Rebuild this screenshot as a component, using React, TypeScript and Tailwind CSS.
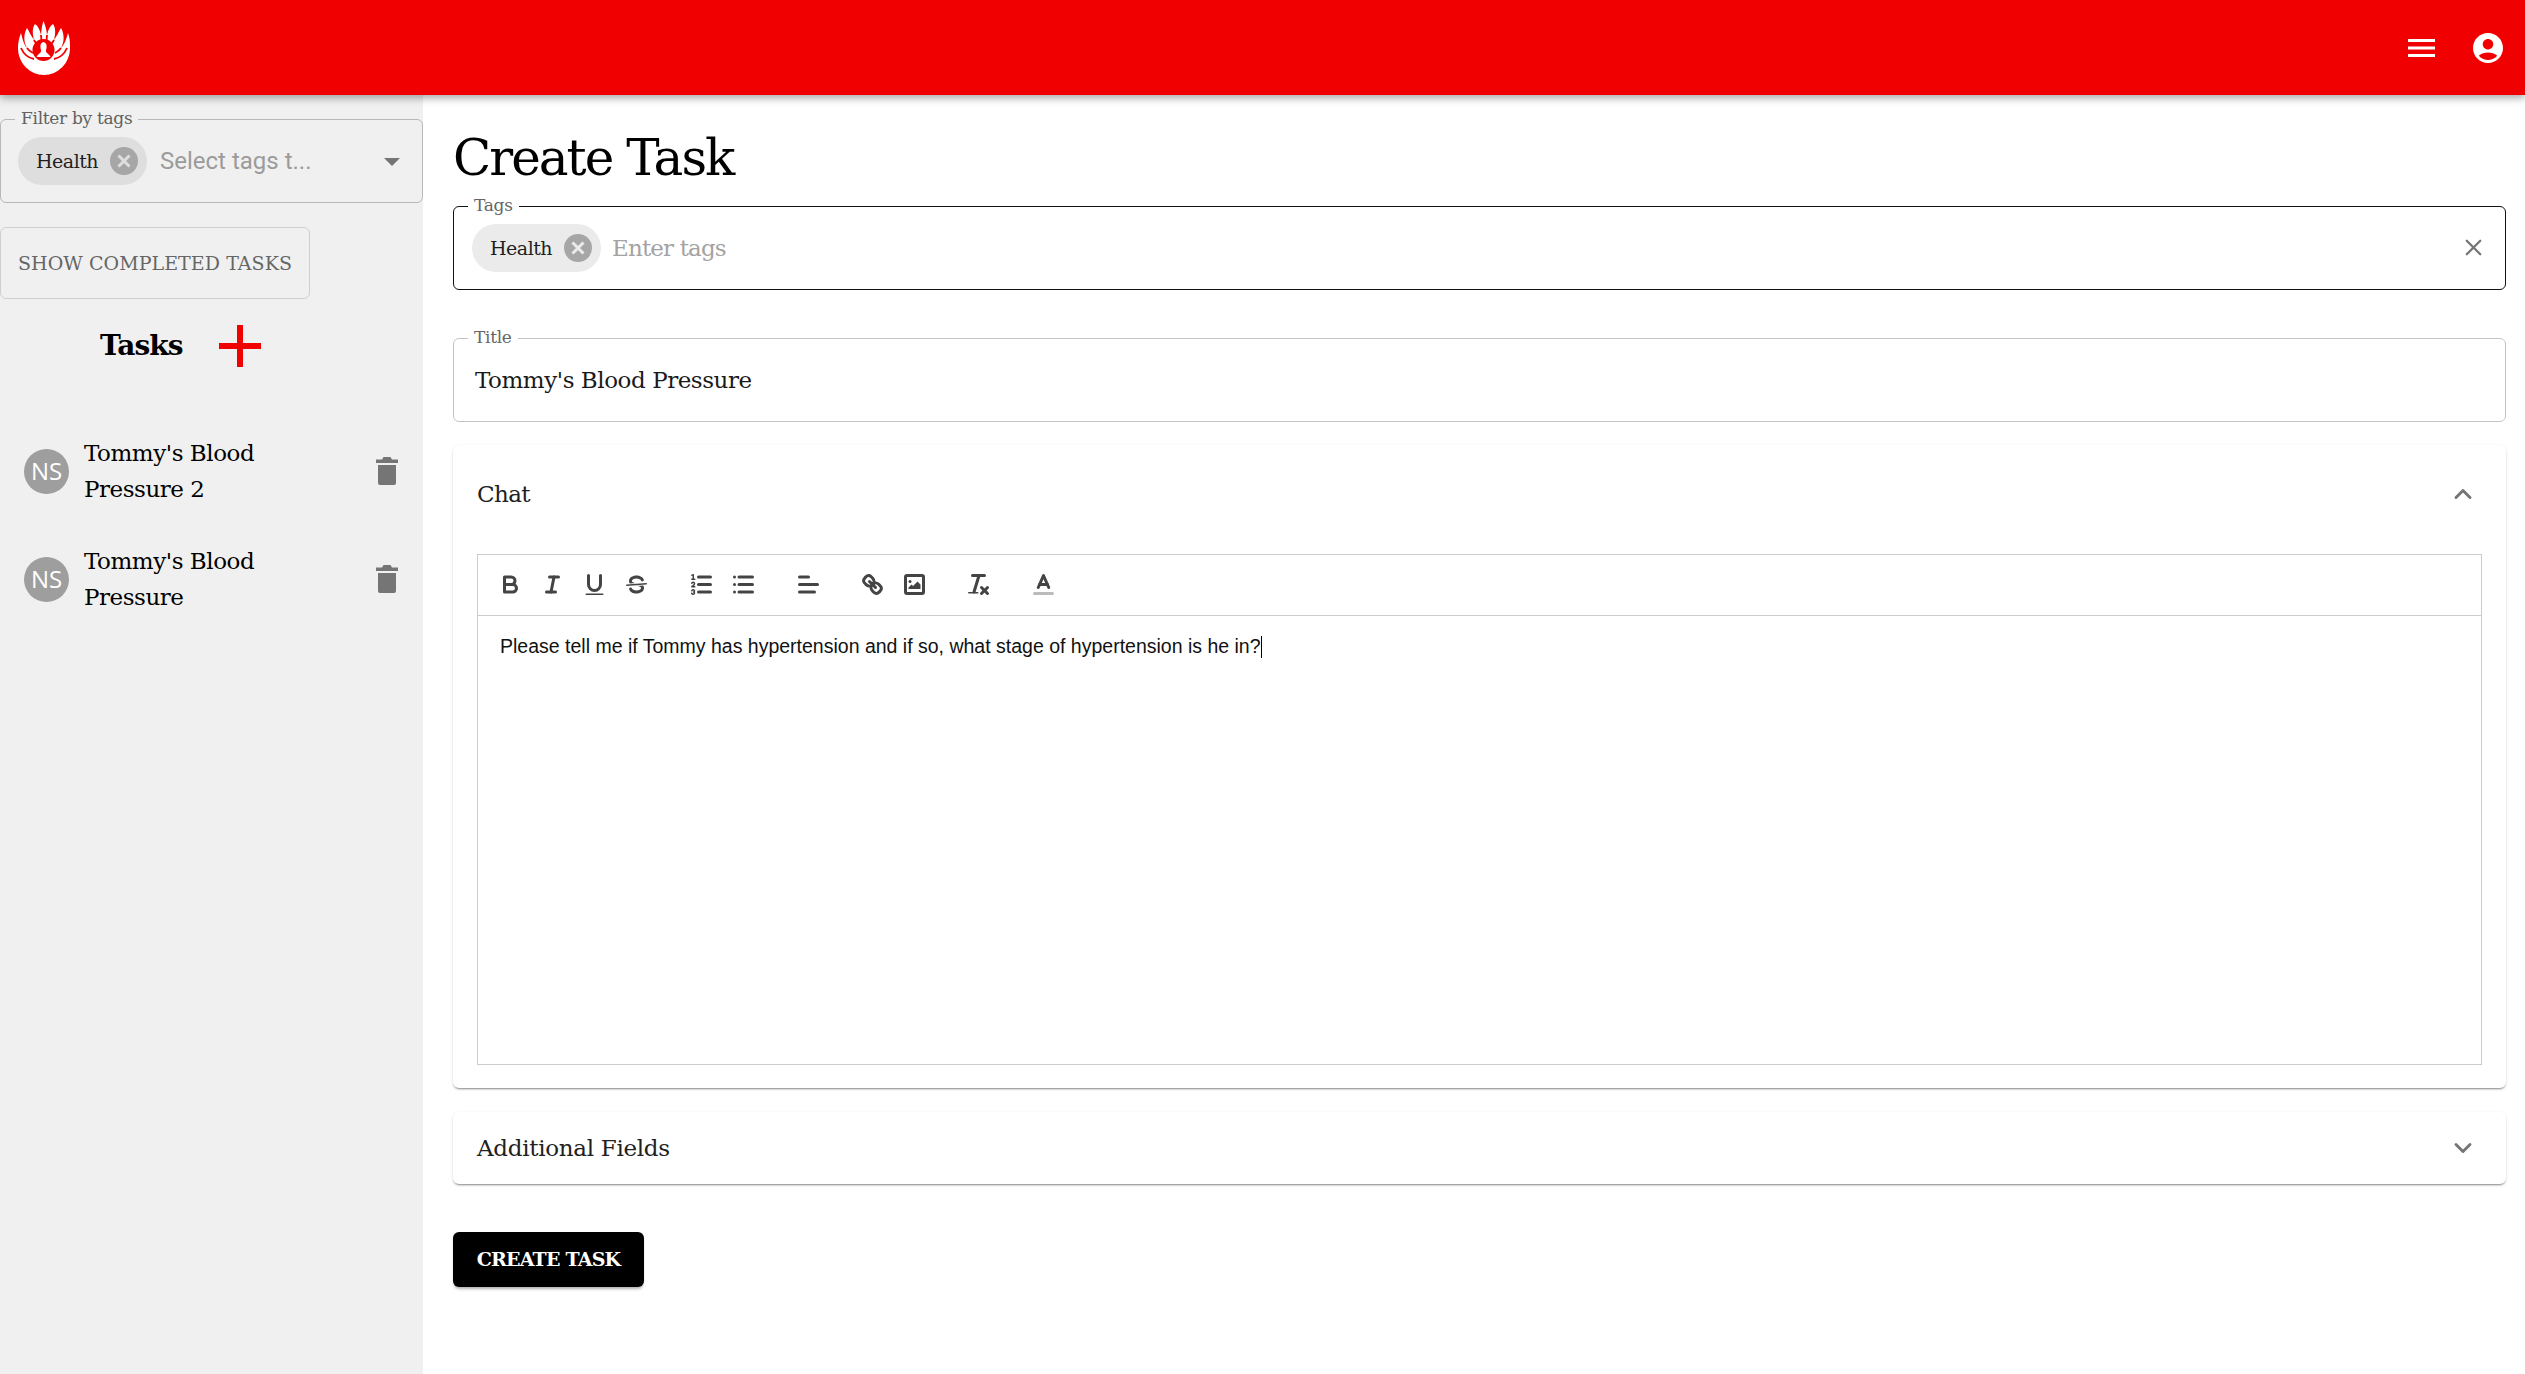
import { ChevronDown, ChevronUp, X } from "lucide-react";

const ql = "fill-none stroke-[#444] stroke-2 [stroke-linecap:round] [stroke-linejoin:round]";
const qlThin = "fill-none stroke-[#444] stroke-1 [stroke-linecap:round] [stroke-linejoin:round]";

function QIcon({ children }: { children: React.ReactNode }) {
  return (
    <button className="w-[42px] h-[36px] flex items-center justify-center shrink-0">
      <svg viewBox="0 0 18 18" className="w-[27px] h-[27px]">{children}</svg>
    </button>
  );
}

function Logo() {
  return (
    <svg viewBox="0 0 52 54" className="w-[52px] h-[54px]">
      <path fill="#fff" d="M25.500 0 C27 4 28.500 8 29 14 C30 9 32 5 35 3 C38 7 37.500 13 36 19 C39 15 41 10 43 7 C46 12 47 20 43 27 C46 24 48.500 18 50 12 C52 17 52 22 52 27 C52 42 40 54 26 54 C12 54 0 42 0 27 C0 22 1 17 3 12 C4.500 18 6 24 9 27 C5 20 6 12 9 7 C11 10 13 15 16 19 C14.500 13 14 7 17 3 C20 5 22 9 23 14 C23.500 8 24 4 25.500 0Z" />
      <g fill="none" stroke="#f00000" strokeWidth="1.800">
        <path d="M9 27 C11 30 13 31 15 32" />
        <path d="M43 27 C41 30 39 31 37 32" />
        <path d="M16 19 C17 21 18 22 19 23" />
        <path d="M36 19 C35 21 34 22 33 23" />
        <path d="M23 14 L23.500 20" />
        <path d="M29 14 L28.500 20" />
        <path d="M3 27 C6 34 11 37 16 38" />
        <path d="M49 27 C46 34 41 37 36 38" />
      </g>
      <circle cx="25.500" cy="29" r="11" fill="#f00000" />
      <path d="M25.500 21 C23 21.500 22 24 22.500 27 C23 29 23.500 30 22.500 31.500 C21 33 19.500 33.500 18.500 36 L32.500 36 C31.500 33.500 30 33 28.500 31.500 C27.500 30 28 29 28.500 27 C29 24 28 21.500 25.500 21Z" fill="#fff" />
    </svg>
  );
}

function Chip({ bg }: { bg: string }) {
  return (
    <div className={`h-[48px] w-[129px] rounded-full flex items-center justify-between pl-[18px] pr-[9px] shrink-0 ${bg}`}>
      <span className="text-[19px] tracking-[-0.5px] text-[#1f1f1f]">Health</span>
      <svg viewBox="0 0 28 28" className="w-[28px] h-[28px]">
        <circle cx="14" cy="14" r="14" fill="#a6a6a6" />
        <path d="M8.500 8.500 L19.500 19.500 M19.500 8.500 L8.500 19.500" stroke={bg === "bg-[#dedede]" ? "#dedede" : "#ebebeb"} strokeWidth="3" />
      </svg>
    </div>
  );
}

function Trash() {
  return (
    <svg viewBox="0 0 22 28" className="w-[22px] h-[28px] fill-[#757575]">
      <path d="M2 8h18v18a2 2 0 0 1-2 2H4a2 2 0 0 1-2-2z" />
      <path d="M0 2.500h6L7.500 0h7L16 2.500h6V6H0z" />
    </svg>
  );
}

function TaskRow({ title }: { title: string }) {
  return (
    <div className="h-[108px] flex items-center pl-[24px] pr-[25px]">
      <div className="w-[45px] h-[45px] rounded-full bg-[#9e9e9e] text-white flex items-center justify-center text-[24px] font-['Open_Sans',sans-serif] shrink-0">NS</div>
      <div className="ml-[15px] w-[240px] text-[23px] leading-[36px] tracking-[-0.45px] text-black">{title}</div>
      <div className="ml-auto"><Trash /></div>
    </div>
  );
}

function Toolbar() {
  return (
    <div className="h-[61px] border-b border-[#ccc] flex items-center pl-[11px] pb-[2px]">
      <div className="flex mr-[23px]">
        <QIcon>
          <path className={ql} d="M5,4H9.500A2.500,2.500,0,0,1,12,6.500v0A2.500,2.500,0,0,1,9.500,9H5A0,0,0,0,1,5,9V4A0,0,0,0,1,5,4Z" />
          <path className={ql} d="M5,9h5.500A2.500,2.500,0,0,1,13,11.500v0A2.500,2.500,0,0,1,10.500,14H5a0,0,0,0,1,0,0V9A0,0,0,0,1,5,9Z" />
        </QIcon>
        <QIcon>
          <line className={ql} x1="7" x2="13" y1="4" y2="4" />
          <line className={ql} x1="5" x2="11" y1="14" y2="14" />
          <line className={ql} x1="8" x2="10" y1="14" y2="4" />
        </QIcon>
        <QIcon>
          <path className={ql} d="M5,3V9a4.012,4.012,0,0,0,4,4H9a4.012,4.012,0,0,0,4-4V3" />
          <rect className="fill-[#444]" height="1" rx="0.5" ry="0.5" width="12" x="3" y="15" />
        </QIcon>
        <QIcon>
          <line className={qlThin} x1="15.500" x2="2.500" y1="8.500" y2="9.500" />
          <path className="fill-[#444]" d="M9.007,8C6.542,7.791,6,7.519,6,6.500,6,5.792,7.283,5,9,5c1.571,0,2.765.679,2.969,1.309a1,1,0,0,0,1.900-.617C13.356,4.106,11.354,3,9,3,6.200,3,4,4.538,4,6.500a3.200,3.200,0,0,0,.5,1.843Z" />
          <path className="fill-[#444]" d="M8.984,10C11.457,10.208,12,10.479,12,11.500c0,.708-1.283,1.500-3,1.500-1.571,0-2.765-.679-2.969-1.309a1,1,0,1,0-1.900.617C4.644,13.894,6.646,15,9,15c2.800,0,5-1.538,5-3.500a3.200,3.200,0,0,0-.5-1.843Z" />
        </QIcon>
      </div>
      <div className="flex mr-[23px]">
        <QIcon>
          <line className={ql} x1="7" x2="15" y1="4" y2="4" />
          <line className={ql} x1="7" x2="15" y1="9" y2="9" />
          <line className={ql} x1="7" x2="15" y1="14" y2="14" />
          <line className={qlThin} x1="2.500" x2="4.500" y1="5.500" y2="5.500" />
          <path className="fill-[#444]" d="M3.500,6A0.500,0.500,0,0,1,3,5.500V3.085l-0.276.138A0.500,0.500,0,0,1,2.053,3c-0.124-.247-0.023-0.324.224-0.447l1-.5A0.500,0.500,0,0,1,4,2.500v3A0.500,0.500,0,0,1,3.500,6Z" />
          <path className={qlThin} d="M4.500,10.500h-2c0-.234,1.850-1.076,1.850-2.234A0.959,0.959,0,0,0,2.500,8.156" />
          <path className={qlThin} d="M2.500,14.846a0.959,0.959,0,0,0,1.850-.109A0.700,0.700,0,0,0,3.750,14a0.688,0.688,0,0,0,.6-0.736,0.959,0.959,0,0,0-1.850-.109" />
        </QIcon>
        <QIcon>
          <line className={ql} x1="6" x2="15" y1="4" y2="4" />
          <line className={ql} x1="6" x2="15" y1="9" y2="9" />
          <line className={ql} x1="6" x2="15" y1="14" y2="14" />
          <line className={ql} x1="3" x2="3" y1="4" y2="4" />
          <line className={ql} x1="3" x2="3" y1="9" y2="9" />
          <line className={ql} x1="3" x2="3" y1="14" y2="14" />
        </QIcon>
      </div>
      <div className="flex mr-[22px]">
        <QIcon>
          <line className={ql} x1="3" x2="15" y1="9" y2="9" />
          <line className={ql} x1="3" x2="13" y1="14" y2="14" />
          <line className={ql} x1="3" x2="9" y1="4" y2="4" />
        </QIcon>
      </div>
      <div className="flex mr-[22px]">
        <QIcon>
          <line className={ql} x1="7" x2="11" y1="7" y2="11" />
          <path className={ql} d="M8.900,4.577a3.476,3.476,0,0,1,.36,4.679A3.476,3.476,0,0,1,4.577,8.900C3.185,7.500,2.035,6.400,4.217,4.217S7.500,3.185,8.900,4.577Z" />
          <path className={ql} d="M13.423,9.100a3.476,3.476,0,0,0-4.679-.36,3.476,3.476,0,0,0,.36,4.679c1.392,1.392,2.500,2.542,4.679.36S14.815,10.500,13.423,9.100Z" />
        </QIcon>
        <QIcon>
          <rect className={ql} height="12" width="12" x="3" y="3" rx="1" ry="1" />
          <circle className="fill-[#444]" cx="6" cy="7" r="1" />
          <polyline className="fill-[#444]" points="5 12 5 11 7 9 8 10 11 7 13 9 13 12 5 12" />
        </QIcon>
      </div>
      <div className="flex mr-[23px]">
        <QIcon>
          <line className={ql} x1="5" x2="13" y1="3" y2="3" />
          <line className={ql} x1="6" x2="9.350" y1="14" y2="3" />
          <line className={ql} x1="11" x2="15" y1="11" y2="15" />
          <line className={ql} x1="15" x2="11" y1="11" y2="15" />
          <rect className="fill-[#444]" height="1" rx="0.5" ry="0.5" width="7" x="2" y="14" />
        </QIcon>
      </div>
      <div className="flex">
        <QIcon>
          <line className="fill-none stroke-[#bbb] stroke-2 [stroke-linecap:round]" x1="3" x2="15" y1="15" y2="15" />
          <polyline className={ql} points="5.500 11 9 3 12.500 11" />
          <line className={ql} x1="11.630" x2="6.380" y1="9" y2="9" />
        </QIcon>
      </div>
    </div>
  );
}

export default function App() {
  return (
    <div className="w-[2525px] h-[1374px] overflow-hidden flex flex-col bg-white font-['DejaVu_Serif',serif]">
      <header className="h-[95px] shrink-0 bg-[#f00000] flex items-center justify-between pl-[18px] pr-[22px] relative z-10 shadow-[0_3px_8px_rgba(0,0,0,0.35)]">
        <Logo />
        <div className="flex items-center">
          <svg viewBox="0 0 27 18" className="w-[27px] h-[18px] fill-white mr-[35px]">
            <path d="M0 0h27v3H0zM0 7.500h27v3H0zM0 15h27v3H0z" />
          </svg>
          <svg viewBox="0 0 24 24" className="w-[36px] h-[36px] fill-white -mr-[3px]">
            <path d="M12 2C6.480 2 2 6.480 2 12s4.480 10 10 10 10-4.480 10-10S17.520 2 12 2zm0 4c1.930 0 3.500 1.570 3.500 3.500S13.930 13 12 13s-3.500-1.570-3.500-3.500S10.070 6 12 6zm0 14c-2.030 0-4.430-.82-6.140-2.880C7.550 15.800 9.680 15 12 15s4.450.8 6.140 2.120C16.430 19.180 14.030 20 12 20z" />
          </svg>
        </div>
      </header>
      <div className="flex-1 flex min-h-0">
        <aside className="w-[423px] shrink-0 bg-[#f0f0f0] flex flex-col pt-[24px]">
          <div className="relative h-[84px] border border-[#b8b8b8] rounded-[6px] flex items-center pl-[17px]">
            <span className="absolute -top-[13px] left-[14px] px-[6px] bg-[#f0f0f0] text-[17px] leading-[22px] tracking-[-0.3px] text-[#616161]">Filter by tags</span>
            <Chip bg="bg-[#dedede]" />
            <span className="ml-[13px] text-[24px] text-[#9b9b9b] font-['Roboto',sans-serif]">Select tags t...</span>
            <svg viewBox="0 0 16 8" className="absolute right-[22px] top-[38px] w-[16px] h-[8px] fill-[#757575]"><path d="M0 0h16L8 8z" /></svg>
          </div>
          <button className="mt-[24px] w-[310px] h-[72px] border border-[#cfcfcf] rounded-[6px] text-left pl-[17px] text-[19px] tracking-[0.05px] text-[#666]">SHOW COMPLETED TASKS</button>
          <div className="mt-[23px] h-[48px] flex items-center pl-[100px]">
            <span className="w-[119px] text-[28px] font-bold tracking-[-0.9px] text-black">Tasks</span>
            <svg viewBox="0 0 42 42" className="w-[42px] h-[42px] fill-[#f00000]"><path d="M18 0h6v18h18v6H24v18h-6V24H0v-6h18z" /></svg>
          </div>
          <div className="mt-[47px]">
            <TaskRow title="Tommy's Blood Pressure 2" />
            <TaskRow title="Tommy's Blood Pressure" />
          </div>
        </aside>
        <main className="flex-1 min-w-0 pl-[30px] pr-[19px] pt-[31px]">
          <h1 className="text-[50px] leading-[64px] tracking-[-2px] text-black">Create Task</h1>
          <div className="relative mt-[16px] h-[84px] border border-[#111] rounded-[6px] flex items-center pl-[18px]">
            <span className="absolute -top-[13px] left-[14px] px-[6px] bg-white text-[17px] leading-[22px] tracking-[-0.3px] text-[#666]">Tags</span>
            <Chip bg="bg-[#ebebeb]" />
            <span className="ml-[11px] text-[23px] tracking-[-0.85px] text-[#a3a3a3]">Enter tags</span>
            <X className="absolute right-[18px] top-[27px] text-[#757575]" size={27} strokeWidth={2} />
          </div>
          <div className="relative mt-[48px] h-[84px] border border-[#c4c4c4] rounded-[6px] flex items-center pl-[21px]">
            <span className="absolute -top-[13px] left-[14px] px-[6px] bg-white text-[17px] leading-[22px] tracking-[-0.3px] text-[#666]">Title</span>
            <span className="text-[23px] tracking-[-0.45px] text-[#1a1a1a]">Tommy's Blood Pressure</span>
          </div>
          <section className="mt-[23px] h-[643px] rounded-[6px] bg-white shadow-[0_2px_2px_-1px_rgba(0,0,0,0.4),0_1px_3px_0_rgba(0,0,0,0.12)] px-[24px] flex flex-col">
            <div className="h-[109px] shrink-0 flex items-center justify-between pb-[11px]">
              <span className="text-[23px] tracking-[-0.6px] text-[#212121]">Chat</span>
              <ChevronUp className="text-[#757575] mr-[5px]" size={28} strokeWidth={2.5} />
            </div>
            <div className="h-[511px] border border-[#ccc] flex flex-col">
              <Toolbar />
              <div className="pl-[22px] pt-[2px] text-[19.5px] text-[#111] font-['Liberation_Sans',sans-serif] flex items-center h-[60px]">
                <span>Please tell me if Tommy has hypertension and if so, what stage of hypertension is he in?</span>
                <span className="inline-block w-px h-[22px] bg-black" />
              </div>
            </div>
          </section>
          <section className="mt-[24px] h-[72px] rounded-[6px] bg-white shadow-[0_2px_2px_-1px_rgba(0,0,0,0.4),0_1px_3px_0_rgba(0,0,0,0.12)] px-[24px] flex items-center justify-between">
            <span className="text-[23px] tracking-[-0.3px] text-[#212121]">Additional Fields</span>
            <ChevronDown className="text-[#757575] mr-[5px]" size={28} strokeWidth={2.5} />
          </section>
          <button className="mt-[48px] w-[191px] h-[55px] bg-black rounded-[6px] text-white text-[19px] font-bold tracking-[-0.8px] shadow-[0_3px_3px_-1px_rgba(0,0,0,0.3)]">CREATE TASK</button>
        </main>
      </div>
    </div>
  );
}
